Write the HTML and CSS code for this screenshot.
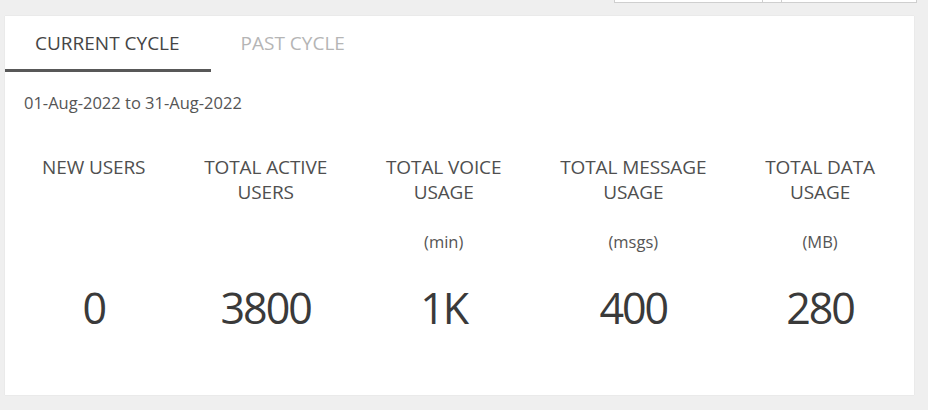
FILE: index.html
```html
<!DOCTYPE html>
<html lang="en">
<head>
<meta charset="utf-8">
<title>Usage summary</title>
<link rel="stylesheet" href="styles.css">
</head>
<body>
  <div class="toolbar">
    <div class="picker picker-date"></div>
    <div class="picker picker-btn"></div>
    <div class="picker picker-select"></div>
  </div>
  <section class="card">
    <nav class="tabs">
      <div class="tab tab-active">CURRENT CYCLE</div>
      <div class="tab">PAST CYCLE</div>
    </nav>
    <div class="range">01-Aug-2022 to 31-Aug-2022</div>
    <div class="stats">
      <div class="stat">
        <div class="stat-title">NEW USERS</div>
        <div class="stat-unit"></div>
        <div class="stat-value">0</div>
      </div>
      <div class="stat">
        <div class="stat-title">TOTAL ACTIVE<br>USERS</div>
        <div class="stat-unit"></div>
        <div class="stat-value">3800</div>
      </div>
      <div class="stat">
        <div class="stat-title">TOTAL VOICE<br>USAGE</div>
        <div class="stat-unit">(min)</div>
        <div class="stat-value">1K</div>
      </div>
      <div class="stat">
        <div class="stat-title">TOTAL MESSAGE<br>USAGE</div>
        <div class="stat-unit">(msgs)</div>
        <div class="stat-value">400</div>
      </div>
      <div class="stat">
        <div class="stat-title">TOTAL DATA<br>USAGE</div>
        <div class="stat-unit">(MB)</div>
        <div class="stat-value">280</div>
      </div>
    </div>
  </section>
</body>
</html>
```

FILE: styles.css
```css
* { box-sizing: border-box; }

html, body {
  margin: 0;
  padding: 0;
}

body {
  background: #efefef;
  font-family: "Open Sans", "Noto Sans", sans-serif;
  color: #505050;
  width: 928px;
  height: 410px;
  overflow: hidden;
}

.toolbar {
  height: 16px;
  display: flex;
  justify-content: flex-end;
  align-items: flex-start;
  padding-right: 11px;
}

.picker {
  height: 3px;
  background: #fff;
  border: 1px solid #cfcfcf;
  border-top: none;
}

.picker-date { width: 149px; }
.picker-btn { width: 19px; border-left: none; }
.picker-select { width: 135px; border-left: none; }

.card {
  margin-left: 5px;
  width: 909px;
  height: 379px;
  background: #fff;
  box-shadow: 0 0 1px rgba(0, 0, 0, 0.12);
}

.tabs {
  display: flex;
}

.tab {
  padding: 15px 30px 14px;
  font-size: 19px;
  line-height: 24px;
  color: #b5b5b5;
  border-bottom: 3px solid transparent;
  white-space: nowrap;
}

.tab-active {
  color: #454545;
  border-bottom-color: #585858;
  padding-left: 30px;
  padding-right: 31px;
}

.range {
  margin-top: 20px;
  padding-left: 19px;
  font-size: 16.5px;
  line-height: 22px;
  color: #555;
}

.stats {
  display: flex;
  justify-content: space-between;
  padding: 0 39px 0 37px;
  margin-top: 41px;
}

.stat {
  display: flex;
  flex-direction: column;
  align-items: center;
  text-align: center;
}

.stat-title {
  height: 50px;
  font-size: 19px;
  line-height: 25px;
  letter-spacing: -0.1px;
  color: #4f4f4f;
  white-space: nowrap;
}

.stat-unit {
  height: 22px;
  margin-top: 26px;
  font-size: 16.5px;
  line-height: 22px;
  color: #555;
}

.stat-value {
  margin-top: 30px;
  font-size: 43px;
  line-height: 50px;
  letter-spacing: -2px;
  color: #3a3a3a;
}
```
